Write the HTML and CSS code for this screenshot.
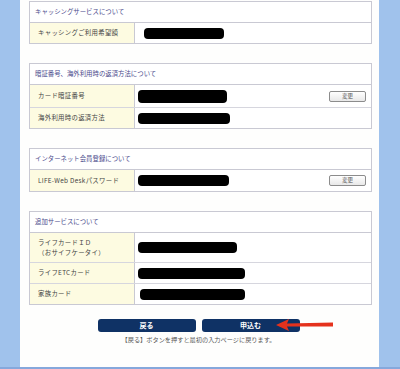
FILE: index.html
```html
<!DOCTYPE html>
<html lang="ja">
<head>
    <meta charset="UTF-8">
    <meta name="viewport" content="width=device-width, initial-scale=1.0">
    <title>申込内容の確認</title>
    <link rel="stylesheet" href="styles.css">
</head>
<body>
    <div class="page">
        <div class="side"></div>
        <div class="main">
            <div class="section">
                <div class="section-title">キャッシングサービスについて</div>
                <div class="row h21">
                    <div class="label">キャッシングご利用希望額</div>
                    <div class="value"><span class="mask far" style="width:80px"></span></div>
                </div>
            </div>

            <div class="section">
                <div class="section-title">暗証番号、海外利用時の返済方法について</div>
                <div class="row h23">
                    <div class="label">カード暗証番号</div>
                    <div class="value"><span class="mask tall" style="width:89px"></span><button class="change">変更</button></div>
                </div>
                <div class="row h21">
                    <div class="label">海外利用時の返済方法</div>
                    <div class="value"><span class="mask" style="width:92px"></span></div>
                </div>
            </div>

            <div class="section">
                <div class="section-title">インターネット会員登録について</div>
                <div class="row h22">
                    <div class="label">LIFE-Web Deskパスワード</div>
                    <div class="value"><span class="mask" style="width:91px"></span><button class="change">変更</button></div>
                </div>
            </div>

            <div class="section">
                <div class="section-title">追加サービスについて</div>
                <div class="row h30">
                    <div class="label">ライフカードＩＤ<br>（おサイフケータイ）</div>
                    <div class="value"><span class="mask" style="width:99px"></span></div>
                </div>
                <div class="row h21">
                    <div class="label">ライフETCカード</div>
                    <div class="value"><span class="mask" style="width:107px"></span></div>
                </div>
                <div class="row h21">
                    <div class="label">家族カード</div>
                    <div class="value"><span class="mask shift" style="width:105px"></span></div>
                </div>
            </div>

            <div class="actions">
                <button class="nav">戻る</button>
                <button class="nav">申込む</button>
                <svg class="arrow" width="60" height="14" viewBox="0 0 60 14">
                    <path d="M1 7 L14 1 L12 5.6 L58 4.6 L58 8.4 L12 8.6 L14 13 Z" fill="#e5321d"/>
                </svg>
            </div>
            <p class="note">【戻る】ボタンを押すと最初の入力ページに戻ります。</p>
        </div>
        <div class="side"></div>
    </div>
</body>
</html>
```

FILE: styles.css
```css
body {
    margin: 0;
    font-family: "Noto Sans CJK JP", "Liberation Serif", serif;
    background-color: #ffffff;
}
.page {
    display: flex;
    width: 400px;
    height: 367px;
    border-bottom: 2px solid #86a8dc;
    overflow: hidden;
}
.side {
    width: 20px;
    flex: none;
    background-color: #a0c2ec;
}
.side:last-child {
    width: 21px;
}
.main {
    flex: 1;
    padding: 1px 7px 0 9px;
    background-color: #fefefd;
}
.section {
    border: 1px solid #c9c9d3;
    margin-bottom: 19px;
    background: #ffffff;
}
.section-title {
    height: 20px;
    line-height: 20px;
    padding-left: 5px;
    font-size: 6.4px;
    color: #4b4b8c;
    border-bottom: 1px solid #c9c9d3;
}
.row {
    display: flex;
    border-bottom: 1px solid #d6d6de;
}
.row:last-child {
    border-bottom: none;
}
.h21 { height: 20px; }
.h22 { height: 21px; }
.h23 { height: 22px; }
.h30 { height: 29px; }
.label {
    width: 96px;
    flex: none;
    padding-left: 8px;
    display: flex;
    flex-direction: column;
    justify-content: center;
    font-size: 6.4px;
    line-height: 10px;
    letter-spacing: 0.3px;
    color: #444444;
    background-color: #fdfbe1;
    border-right: 1px solid #c9c9d3;
}
.value {
    flex: 1;
    display: flex;
    align-items: center;
    padding-left: 3px;
    padding-right: 5px;
}
.mask {
    display: block;
    height: 11px;
    background: #000000;
    border-radius: 4px;
}
.mask.tall {
    height: 13px;
}
.mask.shift {
    margin-left: 2px;
}
.mask.far {
    margin-left: 6px;
}
.change {
    margin-left: auto;
    width: 37px;
    height: 11px;
    padding: 0;
    font-family: inherit;
    font-size: 5.5px;
    line-height: 9px;
    color: #555555;
    background: linear-gradient(#ffffff, #e8e8e8);
    border: 1px solid #8c8c8c;
    border-radius: 2px;
}
.actions {
    position: relative;
    display: flex;
    justify-content: center;
    gap: 6px;
    margin-top: -5px;
    padding-right: 4px;
}
.nav {
    width: 98px;
    height: 13px;
    padding: 0;
    font-family: inherit;
    font-size: 7px;
    font-weight: bold;
    line-height: 13px;
    color: #ffffff;
    background-color: #0f3265;
    border: none;
    border-radius: 3px;
}
.arrow {
    position: absolute;
    left: 246px;
    top: -1px;
}
.note {
    margin: 3px 0 0;
    text-align: center;
    font-size: 6.2px;
    color: #555555;
    padding-right: 4px;
}
```
